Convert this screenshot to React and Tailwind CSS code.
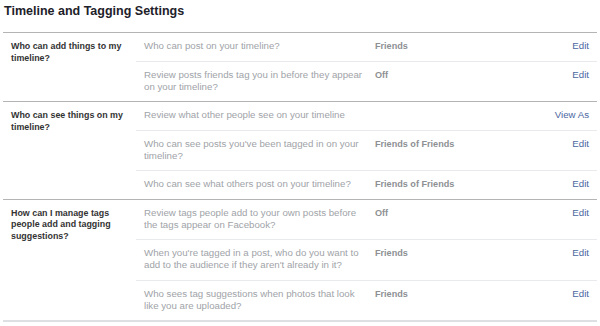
const sections = [
  {
    label: "Who can add things to my timeline?",
    rows: [
      { text: "Who can post on your timeline?", value: "Friends", action: "Edit" },
      {
        text: "Review posts friends tag you in before they appear on your timeline?",
        value: "Off",
        action: "Edit",
      },
    ],
  },
  {
    label: "Who can see things on my timeline?",
    rows: [
      { text: "Review what other people see on your timeline", value: "", action: "View As" },
      {
        text: "Who can see posts you've been tagged in on your timeline?",
        value: "Friends of Friends",
        action: "Edit",
      },
      {
        text: "Who can see what others post on your timeline?",
        value: "Friends of Friends",
        action: "Edit",
      },
    ],
  },
  {
    label: "How can I manage tags people add and tagging suggestions?",
    rows: [
      {
        text: "Review tags people add to your own posts before the tags appear on Facebook?",
        value: "Off",
        action: "Edit",
      },
      {
        text: "When you're tagged in a post, who do you want to add to the audience if they aren't already in it?",
        value: "Friends",
        action: "Edit",
      },
      {
        text: "Who sees tag suggestions when photos that look like you are uploaded?",
        value: "Friends",
        action: "Edit",
      },
    ],
  },
];

export default function App() {
  return (
    <div className="w-[600px] h-[326px] bg-white font-['Liberation_Sans',Arial,sans-serif] px-[3px] overflow-hidden">
      {/* Header */}
      <h2 className="h-[32px] pl-[1px] pt-[3px] text-[12.5px] leading-[16px] font-bold text-[#1d2129]">
        Timeline and Tagging Settings
      </h2>

      <div className="border-b-2 border-[#dddfe2]">
        {sections.map((section, i) => (
          <div key={i} className="flex border-t border-[#b4b4b4]">
            <div className="w-[133px] shrink-0 pl-[8px] pr-[4px] pt-[8px] text-[8.9px] leading-[11.5px] font-bold text-[#333]">
              {section.label}
            </div>

            <div className="flex-1">
              {section.rows.map((row, j) => (
                <div
                  key={j}
                  className={`flex pt-[7px] pb-[8.5px] text-[9.7px] leading-[12px] ${
                    j > 0 ? "border-t border-[#e9eaed]" : ""
                  }`}
                >
                  <div className="w-[239px] shrink-0 pl-[8px] pr-[7px] text-[#a0a3a8]">{row.text}</div>
                  <div className="flex-1 font-bold text-[9.1px] text-[#8d8f93]">{row.value}</div>
                  <a className="pr-[8px] text-[#4b67a1]">{row.action}</a>
                </div>
              ))}
            </div>
          </div>
        ))}
      </div>
    </div>
  );
}
